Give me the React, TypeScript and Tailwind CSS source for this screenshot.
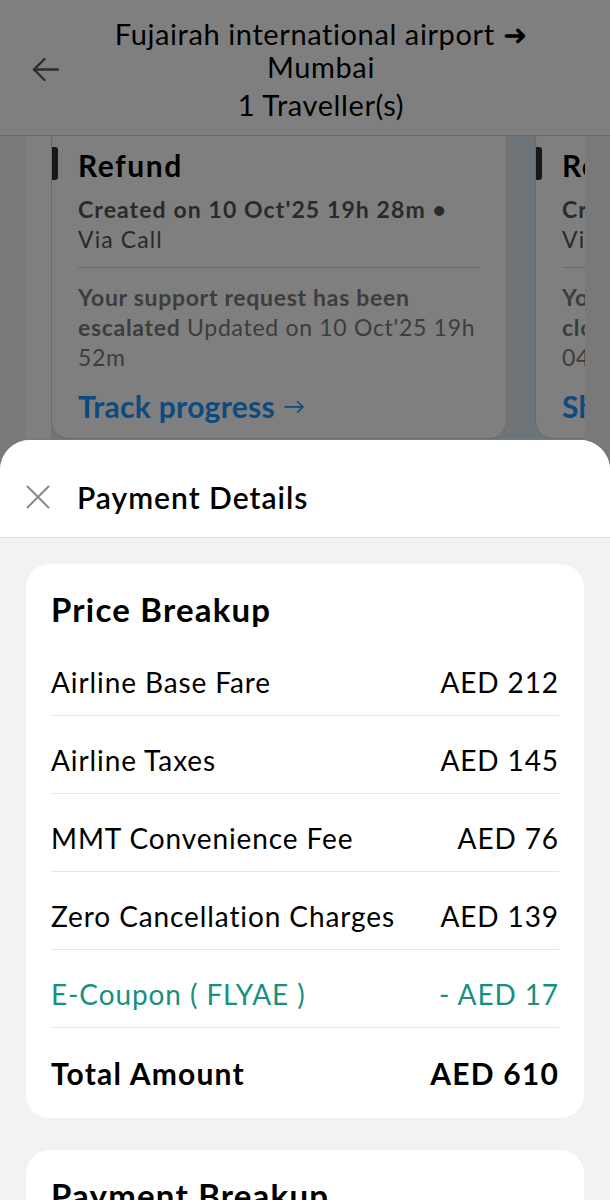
const rows = [
  { label: "Airline Base Fare", value: "AED 212" },
  { label: "Airline Taxes", value: "AED 145" },
  { label: "MMT Convenience Fee", value: "AED 76" },
  { label: "Zero Cancellation Charges", value: "AED 139" },
  { label: "E-Coupon ( FLYAE )", value: "- AED 17", coupon: true },
]

function TicketCard({ created, status, updated, date, keepDate, action }: { created: string; status: string; updated: string; date: string; keepDate?: boolean; action: string }) {
  return (
    <div className="relative w-[456px] shrink-0 rounded-[18px] border border-[#d6d6d6] bg-white px-[26px] pt-[23px] pb-[14px]">
      {/* accent bar */}
      <div className="absolute left-0 top-[23px] h-[33px] w-[6px] rounded-r-[3px] bg-[#2e2e2e]" />
      <div className="text-[30px] font-bold leading-[36px] tracking-[1.5px] text-black">Refund</div>
      <div className="mt-[11px] text-[23px] leading-[30px] tracking-[1.1px] text-[#555555]">
        <span className="font-bold">{created} •</span> Via Call
      </div>
      <div className="mt-[13px] h-px bg-[#d9d9d9]" />
      <p className="mt-[14px] text-[23px] leading-[30px] tracking-[0.7px] text-[#7a7a7a]">
        <span className="font-bold">{status}</span> {updated} <span className={keepDate ? "whitespace-nowrap" : ""}>{date}</span>
      </p>
      <div className="mt-[16px] flex items-center gap-[8px] text-[30px] font-bold leading-[36px] tracking-[0.3px] text-[#1a96ff]">
        {action}
        <span className="text-[22px] font-normal">→</span>
      </div>
    </div>
  )
}

export default function App() {
  return (
    <div className="relative h-[1200px] w-[610px] overflow-hidden bg-[#f2f2f2] font-['Lato',sans-serif]">
      {/* Page header */}
      <div className="relative z-10 flex border-b border-[#d4d4d4] bg-white pt-[17px] pb-[14px]">
        <div className="flex w-[72px] shrink-0 items-center pl-[32px] text-[#5a5a5a]">
          <svg width="27" height="25" viewBox="0 0 27 25" fill="none" stroke="currentColor" strokeWidth="2.4" strokeLinecap="round" strokeLinejoin="round">
            <path d="M26 12.5H2" />
            <path d="M12.5 2 2 12.5 12.5 23" />
          </svg>
        </div>
        <div className="flex-1 pr-[40px] text-center text-[29px] leading-[33px] tracking-[0.6px] text-black">
          <div>Fujairah international airport ➜ Mumbai</div>
          <div className="mt-[5px]">1 Traveller(s)</div>
        </div>
      </div>

      {/* Support tickets carousel */}
      <div className="mx-[25px] -mt-[13px] overflow-hidden bg-white pl-[26px]">
        <div className="flex gap-[28px] bg-[#dfe8f1]">
          <TicketCard
            created="Created on 10 Oct'25 19h 28m"
            status="Your support request has been escalated"
            updated="Updated on"
            date="10 Oct'25 19h 52m"
            action="Track progress"
          />
          <TicketCard
            created="Created on 04 Oct'25 11h 02m"
            status="Your support request has been closed"
            updated="Updated on"
            date="04 Oct'25 16h 40m"
            keepDate
            action="Show details"
          />
        </div>
      </div>

      {/* Scrim */}
      <div className="absolute inset-0 z-20 bg-black/50" />

      {/* Payment details sheet */}
      <div className="absolute inset-x-0 top-[440px] bottom-0 z-30 overflow-hidden rounded-t-[30px] bg-[#f2f2f2]">
        <div className="flex h-[98px] items-center gap-[27px] border-b border-[#dedede] bg-white pt-[16px] pl-[26px]">
          <svg width="24" height="24" viewBox="0 0 24 24" fill="none" stroke="#8a8a8a" strokeWidth="2" strokeLinecap="round">
            <path d="M1.5 1.5 22.5 22.5M22.5 1.5 1.5 22.5" />
          </svg>
          <div className="text-[30px] font-semibold leading-[36px] tracking-[1px] text-black">Payment Details</div>
        </div>

        <div className="flex flex-col gap-[32px] px-[26px] pt-[26px]">
          <div className="rounded-[24px] bg-white px-[25px] pt-[25px] pb-[27px]">
            <div className="text-[33px] font-bold leading-[40px] tracking-[1.2px] text-black">Price Breakup</div>
            <div className="mt-[9px]">
              {rows.map((row) => (
                <div
                  key={row.label}
                  className={`flex justify-between border-b border-[#e6e6e6] pt-[27px] pb-[16px] text-[28px] leading-[34px] tracking-[0.9px] ${row.coupon ? "text-[#17907f]" : "text-black"}`}
                >
                  <span>{row.label}</span>
                  <span>{row.value}</span>
                </div>
              ))}
              <div className="flex justify-between pt-[27px] text-[30px] font-bold leading-[36px] tracking-[1.2px] text-black">
                <span>Total Amount</span>
                <span>AED 610</span>
              </div>
            </div>
          </div>

          <div className="rounded-[24px] bg-white px-[25px] pt-[25px] pb-[24px]">
            <div className="text-[33px] font-bold leading-[40px] tracking-[1.2px] text-black">Payment Breakup</div>
          </div>
        </div>
      </div>
    </div>
  )
}
